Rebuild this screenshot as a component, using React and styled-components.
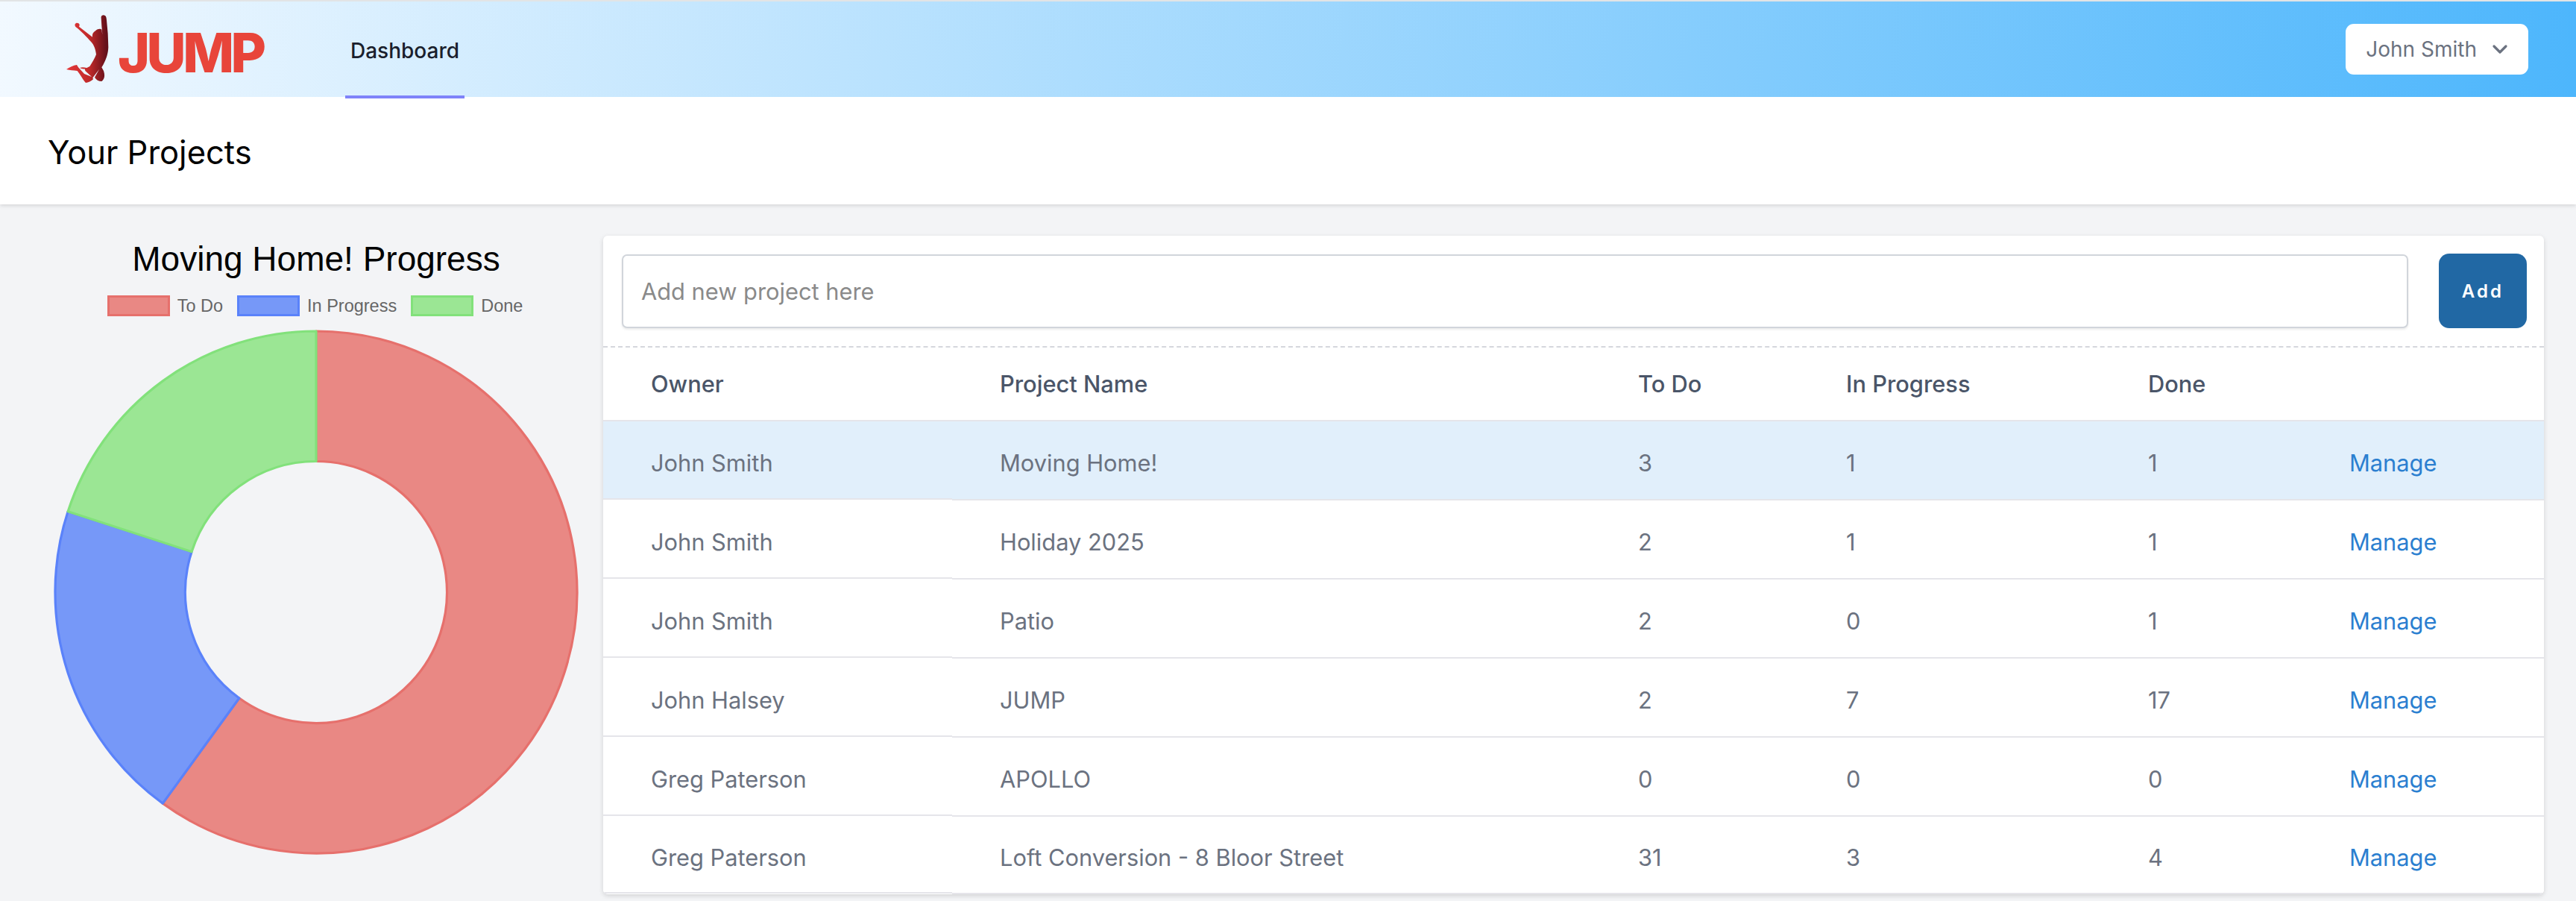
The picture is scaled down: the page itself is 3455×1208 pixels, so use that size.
import React from 'react';
import styled, { createGlobalStyle } from 'styled-components';
import { ChevronDown } from 'lucide-react';

const projects = [
  { owner: 'John Smith', name: 'Moving Home!', todo: 3, progress: 1, done: 1, active: true },
  { owner: 'John Smith', name: 'Holiday 2025', todo: 2, progress: 1, done: 1 },
  { owner: 'John Smith', name: 'Patio', todo: 2, progress: 0, done: 1 },
  { owner: 'John Halsey', name: 'JUMP', todo: 2, progress: 7, done: 17 },
  { owner: 'Greg Paterson', name: 'APOLLO', todo: 0, progress: 0, done: 0 },
  { owner: 'Greg Paterson', name: 'Loft Conversion - 8 Bloor Street', todo: 31, progress: 3, done: 4 },
];

const slices = [
  { label: 'To Do', value: 3, fill: '#e98884', stroke: '#e6706c' },
  { label: 'In Progress', value: 1, fill: '#7698f8', stroke: '#5a82fa' },
  { label: 'Done', value: 1, fill: '#9be694', stroke: '#82e17b' },
];

function arcPath(start, end, R, r, c) {
  const pt = (rad, a) => `${(c + rad * Math.sin(a)).toFixed(2)} ${(c - rad * Math.cos(a)).toFixed(2)}`;
  const large = end - start > Math.PI ? 1 : 0;
  return `M${pt(R, start)} A${R} ${R} 0 ${large} 1 ${pt(R, end)} L${pt(r, end)} A${r} ${r} 0 ${large} 0 ${pt(r, start)} Z`;
}

function Donut() {
  const total = slices.reduce((sum, s) => sum + s.value, 0);
  let angle = 0;
  return (
    <svg width="704" height="704" viewBox="0 0 704 704">
      {slices.map((s) => {
        const start = angle;
        angle += (s.value / total) * Math.PI * 2;
        return (
          <path
            key={s.label}
            d={arcPath(start, angle, 350, 175.5, 352)}
            fill={s.fill}
            stroke={s.stroke}
            strokeWidth="3.2"
            strokeLinejoin="round"
          />
        );
      })}
    </svg>
  );
}

function Jumper() {
  return (
    <svg width="57" height="92" viewBox="28 15 171 276">
      <defs>
        <linearGradient id="jumper" x1="0" y1="0" x2="1" y2="0">
          <stop offset="0" stopColor="#e5383a" />
          <stop offset="0.55" stopColor="#c02a2a" />
          <stop offset="0.95" stopColor="#64101a" />
        </linearGradient>
      </defs>
      <path
        fill="url(#jumper)"
        d="M63 52 C66 45 78 45 81 54 C81 58 80 60 79 62 L133 104 C131 92 136 84 146 78 C154 70 166 70 170 74 L173 95 L170 60 L168 28 C166 18 176 13 184 18 C189 22 189 28 190 36 L195 90 L197 145 C196 170 190 190 176 216 L170 226 L178 240 C184 258 182 274 170 282 C158 282 148 276 142 266 L160 234 L134 268 L136 274 C128 282 116 288 106 288 C96 278 84 254 72 240 C56 238 42 238 28 234 C40 226 56 218 70 216 L76 226 L100 252 L130 264 L104 240 L102 232 C94 234 88 230 82 228 C90 225 100 226 110 228 L122 222 C132 206 142 190 148 174 C146 154 138 134 128 124 C110 104 88 80 66 64 C62 60 62 56 63 52 Z"
      />
    </svg>
  );
}

function App() {
  return (
    <Page>
      <GlobalStyle />
      <Nav>
        <Logo>
          <Jumper />
          <LogoText>JUMP</LogoText>
        </Logo>
        <NavLink>Dashboard</NavLink>
        <UserButton>
          John Smith
          <ChevronDown size={32} strokeWidth={2.4} />
        </UserButton>
      </Nav>

      <PageHeader>
        <PageTitle>Your Projects</PageTitle>
      </PageHeader>

      <Main>
        <ChartColumn>
          <ChartTitle>Moving Home! Progress</ChartTitle>
          <Legend>
            {slices.map((s) => (
              <LegendItem key={s.label}>
                <Swatch $fill={s.fill} $stroke={s.stroke} />
                {s.label}
              </LegendItem>
            ))}
          </Legend>
          <Donut />
        </ChartColumn>

        <Card>
          <AddForm>
            <AddInput placeholder="Add new project here" />
            <AddButton>Add</AddButton>
          </AddForm>
          <HeadRow>
            <HeadCell>Owner</HeadCell>
            <HeadCell>Project Name</HeadCell>
            <HeadCell>To Do</HeadCell>
            <HeadCell>In Progress</HeadCell>
            <HeadCell>Done</HeadCell>
            <HeadCell />
          </HeadRow>
          {projects.map((p, index) => (
            <Row key={p.name} $last={index === projects.length - 1}>
              <OwnerCell $active={p.active}>{p.owner}</OwnerCell>
              <Cell $active={p.active}>{p.name}</Cell>
              <Cell $active={p.active}>{p.todo}</Cell>
              <Cell $active={p.active}>{p.progress}</Cell>
              <Cell $active={p.active}>{p.done}</Cell>
              <Cell $active={p.active}>
                <ManageLink>Manage</ManageLink>
              </Cell>
            </Row>
          ))}
        </Card>
      </Main>
    </Page>
  );
}

const GlobalStyle = createGlobalStyle`
  html, body {
    margin: 0;
    padding: 0;
    background: #f3f4f6;
    font-family: 'Inter', 'Liberation Sans', sans-serif;
  }
  * {
    box-sizing: border-box;
  }
`;

const Page = styled.div`
  width: 100%;
  height: 1208px;
  overflow: hidden;
  background: #f3f4f6;
`;

const Nav = styled.nav`
  display: flex;
  align-items: center;
  height: 130px;
  padding: 0 64px 0 89px;
  border-top: 2px solid #e2e4e5;
  background: linear-gradient(94deg, #f2f9ff 0%, #4db6fc 100%);
  position: relative;
  z-index: 2;
`;

const Logo = styled.div`
  display: flex;
  align-items: flex-end;
  gap: 12px;
  width: 374px;
  height: 92px;
`;

const LogoText = styled.span`
  font-size: 73px;
  font-weight: 800;
  line-height: 1;
  letter-spacing: -4.5px;
  color: #e8453a;
  margin-bottom: 5px;
`;

const NavLink = styled.a`
  display: flex;
  align-items: center;
  justify-content: center;
  align-self: flex-start;
  width: 160px;
  height: 130px;
  padding-top: 6px;
  border-bottom: 4px solid #7f83f9;
  font-size: 28px;
  font-weight: 500;
  color: #1a202c;
`;

const UserButton = styled.button`
  display: flex;
  align-items: center;
  gap: 15px;
  height: 68px;
  margin-left: auto;
  padding: 0 22px 0 27px;
  border: none;
  border-radius: 11px;
  background: #fff;
  color: #6b7280;
  font: 400 28px 'Inter', sans-serif;
`;

const PageHeader = styled.header`
  display: flex;
  align-items: center;
  height: 144px;
  padding: 3px 0 0 64px;
  background: #fff;
  box-shadow: 0 2px 5px rgba(0, 0, 0, 0.12);
  position: relative;
  z-index: 1;
`;

const PageTitle = styled.h1`
  margin: 0;
  font-size: 43.5px;
  font-weight: 400;
  color: #000;
`;

const Main = styled.main`
  display: flex;
  align-items: flex-start;
  padding: 42px 43px 0 72px;
  gap: 33px;
`;

const ChartColumn = styled.section`
  display: flex;
  flex-direction: column;
  align-items: center;
  width: 704px;
  flex: none;
  padding-top: 5px;
`;

const ChartTitle = styled.h2`
  margin: 0;
  font: 400 46px/52px 'Liberation Sans', Arial, sans-serif;
  color: #000;
  white-space: nowrap;
`;

const Legend = styled.div`
  display: flex;
  gap: 19px;
  margin: 23px 3px 18px 0;
`;

const LegendItem = styled.div`
  display: flex;
  align-items: center;
  gap: 10px;
  height: 28px;
  font: 400 23.5px 'Liberation Sans', Arial, sans-serif;
  color: #666;
`;

const Swatch = styled.span`
  width: 84px;
  height: 28px;
  background: ${(props) => props.$fill};
  border: 3px solid ${(props) => props.$stroke};
`;

const Card = styled.section`
  flex: 1;
  height: 883px;
  background: #fff;
  border-radius: 6px;
  box-shadow: 0 2px 6px rgba(0, 0, 0, 0.14);
  overflow: hidden;
`;

const AddForm = styled.div`
  display: flex;
  align-items: center;
  gap: 41px;
  height: 150px;
  padding: 0 23px 0 25px;
  border-bottom: 2px dashed #d5d7dd;
`;

const AddInput = styled.input`
  flex: 1;
  height: 99px;
  padding: 0 24px;
  border: 2.5px solid #d1d5db;
  border-radius: 7px;
  box-shadow: 0 2px 3px rgba(0, 0, 0, 0.08);
  font: 400 30.8px 'Inter', sans-serif;
  outline: none;

  &::placeholder {
    color: #8a8a8a;
    opacity: 1;
  }
`;

const AddButton = styled.button`
  width: 118px;
  height: 100px;
  border: none;
  border-radius: 14px;
  background: #2168a4;
  color: #fff;
  font: 600 24px 'Inter', sans-serif;
  letter-spacing: 0.13em;
`;

const columns = '468px 856px 279px 405px 270px 1fr';

const HeadRow = styled.div`
  display: grid;
  grid-template-columns: ${columns};
  height: 99px;
  border-bottom: 2px solid #e5e5ea;
`;

const HeadCell = styled.div`
  display: flex;
  align-items: center;
  padding-left: 64px;
  font-size: 30.8px;
  font-weight: 500;
  color: #4a5568;
`;

const Row = styled.div`
  display: grid;
  grid-template-columns: ${columns};
  height: ${(props) => (props.$last ? '104px' : '106px')};
`;

const Cell = styled.div`
  display: flex;
  align-items: center;
  padding: 7px 0 0 64px;
  font-size: 30.8px;
  color: #6b7280;
  background: ${(props) => (props.$active ? '#e1effb' : '#fff')};
  border-bottom: 2px solid #e5e5ea;
`;

const OwnerCell = styled(Cell)`
  margin-bottom: 1px;
`;

const ManageLink = styled.a`
  color: #2b7fd0;
`;

export default App;
